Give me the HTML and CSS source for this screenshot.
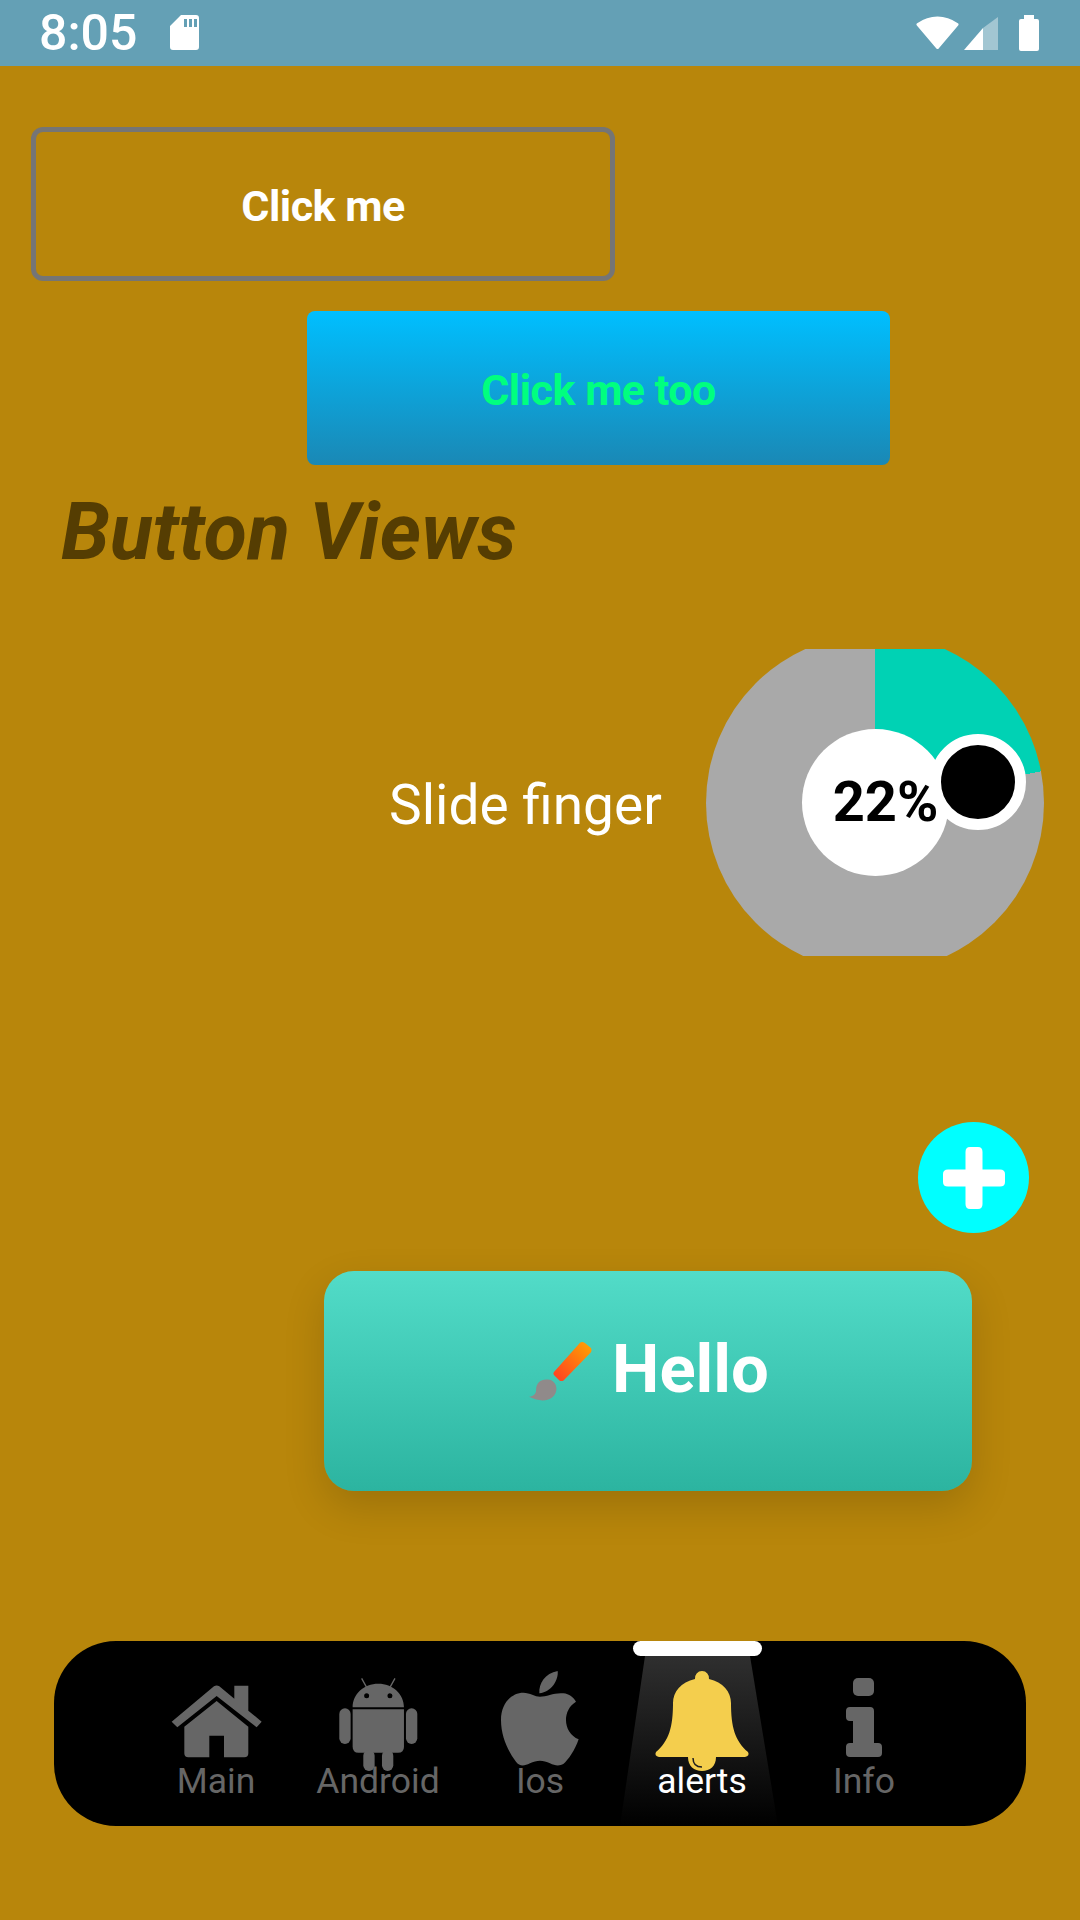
FILE: index.html
```html
<!DOCTYPE html>
<html lang="en">
<head>
    <meta charset="UTF-8">
    <meta name="viewport" content="width=device-width, initial-scale=1.0">
    <title>Button Views</title>
    <link rel="stylesheet" href="styles.css">
</head>
<body>

<!-- Status bar -->
<div class="status-bar">
    <span class="clock">8:05</span>
    <svg class="sd-icon" viewBox="0 0 29 35"><path fill="#fff" fill-rule="evenodd" d="M11 0H26Q29 0 29 3V32Q29 35 26 35H3Q0 35 0 32V11ZM14 4V12H17V4ZM19 4V12H22V4ZM24 4V12H27V4Z"/></svg>
    <div class="status-right">
        <svg class="wifi-icon" viewBox="0 0 43 33"><path fill="#fff" stroke="#fff" stroke-width="3" stroke-linejoin="round" d="M21.500 2C14 2 7 5 2 8.500L21.500 31.500L41 8.500C36 5 29 2 21.500 2Z"/></svg>
        <svg class="signal-icon" viewBox="0 0 35 33"><path fill="#fff" fill-opacity="0.4" d="M34 0V33H19V11Z"/><path fill="#fff" d="M19 11V33H0Z"/></svg>
        <svg class="battery-icon" viewBox="0 0 20 36"><path fill="#fff" d="M5 0H15V4H18Q20 4 20 6V34Q20 36 18 36H2Q0 36 0 34V6Q0 4 2 4H5Z"/></svg>
    </div>
</div>

<!-- Buttons -->
<div class="btn btn-outline">Click me</div>
<div class="btn btn-blue">Click me too</div>
<h1 class="title">Button Views</h1>

<!-- Slider -->
<div class="slider-row">
    <span class="slider-label">Slide finger</span>
    <div class="dial">
        <div class="dial-disc"></div>
        <div class="dial-center">22%</div>
        <div class="dial-handle"></div>
    </div>
</div>

<div class="fab-row">
    <div class="fab">
        <svg class="fab-plus" viewBox="0 0 62 62"><path fill="#fff" d="M27 0H35Q39.500 0 39.500 5V22.500H57Q62 22.500 62 27V35Q62 39.500 57 39.500H39.500V57Q39.500 62 35 62H27Q22.500 62 22.500 57V39.500H5Q0 39.500 0 35V27Q0 22.500 5 22.500H22.500V5Q22.500 0 27 0Z"/></svg>
    </div>
</div>

<div class="hello-row">
    <div class="hello-btn">
        <svg class="brush-icon" viewBox="0 0 62 62">
            <defs>
                <linearGradient id="brushGrad" x1="1" y1="0" x2="0" y2="1">
                    <stop offset="0" stop-color="#ffa500"/>
                    <stop offset="1" stop-color="#ff3b24"/>
                </linearGradient>
            </defs>
            <path fill="url(#brushGrad)" d="M50 1Q52 -1 55 1L61 6Q62 8 61 10L34 38Q32 39 30 38L25 33Q23 31 25 29Z"/>
            <path fill="#908a8a" d="M17 37C23 36 27 41 27 46C27 55 16 62 0 54C5 53 7 51 7 47C7 41 11 37 17 37Z"/>
        </svg>
        <span>Hello</span>
    </div>
</div>

<!-- Bottom navigation -->
<nav class="bottom-nav">
    <div class="nav-item">
        <svg class="nav-icon" viewBox="0 0 90 90"><g transform="translate(-131 -61) scale(0.3333)"><path d="M395 305L522 199Q530 194 538 199L583 236V197H625V272L665 305L650 322L530 228L412 322Z"/><path d="M530 243L625 320V400Q625 412 613 412H552V347H508V412H445Q433 412 433 400V320Z"/></g></svg>
        <span class="nav-label">Main</span>
    </div>
    <div class="nav-item">
        <svg class="nav-icon" viewBox="0 0 90 90"><g transform="translate(-293 -61) scale(0.3333)"><path d="M965 175L980 202M1065 175L1050 202" stroke="#666" stroke-width="4" fill="none"/><path fill-rule="evenodd" d="M938 262C938 222 972 191 1015 191C1058 191 1092 222 1092 262ZM980 220A7 7 0 1 0 980 235A7 7 0 1 0 980 220ZM1050 220A7 7 0 1 0 1050 235A7 7 0 1 0 1050 220Z"/><path d="M938 268H1092V380Q1092 398 1074 398H956Q938 398 938 380Z"/><rect x="898" y="265" width="34" height="107" rx="17"/><rect x="1098" y="265" width="34" height="107" rx="17"/><rect x="970" y="390" width="34" height="63" rx="17"/><rect x="1026" y="390" width="34" height="63" rx="17"/></g></svg>
        <span class="nav-label">Android</span>
    </div>
    <div class="nav-item">
        <svg class="nav-icon" viewBox="0 0 90 90"><g transform="translate(-15 -21) scale(0.3333)"><path d="M233 33C236 60 215 95 178 100C176 70 195 40 233 33Z"/><path d="M180 110C200 110 225 97 250 100C268 102 280 112 288 125C268 137 258 158 258 180C258 205 272 228 296 238C285 270 265 300 250 312C240 318 225 318 210 310C190 300 170 300 150 310C130 320 118 318 108 305C85 275 63 230 63 180C63 130 95 98 130 98C150 98 165 110 180 110Z"/></g></svg>
        <span class="nav-label">Ios</span>
    </div>
    <div class="nav-item nav-item-active">
        <div class="nav-beam"></div>
        <div class="nav-marker"></div>
        <svg class="nav-icon nav-icon-bell" viewBox="0 0 94 100"><path d="M47 0A7 7 0 0 1 54 8C68 11 76 21 76 32C76 56 80 70 93 81Q95 85 90 86H4Q-1 85 1 81C14 70 18 56 18 32C18 21 26 11 40 8A7 7 0 0 1 47 0Z"/><path d="M33 86H61C61 95 55 100 47 100C39 100 33 95 33 86Z"/><path fill="none" stroke="#1f1f1f" stroke-width="1.500" d="M38 87C38 93 41 96 47 96"/></svg>
        <span class="nav-label">alerts</span>
    </div>
    <div class="nav-item">
        <svg class="nav-icon" viewBox="0 0 90 90"><rect x="34" y="-3" width="21" height="18" rx="5"/><path d="M27 30Q27 26 31 26H51Q55 26 55 30V62H59Q63 62 63 66V72Q63 76 59 76H31Q27 76 27 72V66Q27 62 31 62H34V40H31Q27 40 27 36Z"/></svg>
        <span class="nav-label">Info</span>
    </div>
</nav>

</body>
</html>
```

FILE: styles.css
```css
html, body {
    margin: 0;
    padding: 0;
}
body {
    width: 1080px;
    height: 1920px;
    overflow: hidden;
    background: #b8860b;
    font-family: Roboto, "Noto Sans", sans-serif;
    color: #fff;
}

/* status bar */
.status-bar {
    height: 66px;
    background: #64a0b5;
    display: flex;
    align-items: center;
    padding: 0 41px 0 39px;
    box-sizing: border-box;
}
.clock {
    font-size: 50px;
    font-weight: 500;
    line-height: 66px;
}
.sd-icon {
    width: 29px;
    height: 35px;
    margin-left: 33px;
    margin-top: -1px;
}
.status-right {
    margin-left: auto;
    display: flex;
    align-items: center;
}
.wifi-icon {
    width: 43px;
    height: 33px;
    margin-top: -2px;
}
.signal-icon {
    width: 35px;
    height: 33px;
    margin-left: 5px;
}
.battery-icon {
    width: 20px;
    height: 36px;
    margin-left: 20px;
}

/* buttons */
.btn {
    display: flex;
    align-items: center;
    justify-content: center;
    width: 583px;
    height: 154px;
    padding-top: 3px;
    box-sizing: border-box;
    font-size: 43px;
    font-weight: 700;
    letter-spacing: -0.5px;
}
.btn-outline {
    width: 584px;
    margin: 61px 0 0 31px;
    border: 5px solid #757575;
    border-radius: 12px;
}
.btn-blue {
    margin: 30px 0 0 307px;
    border-radius: 8px;
    background: linear-gradient(#00bfff, #1a88b5);
    color: #00ff7f;
}
.title {
    margin: 12px 0 0 61px;
    font-size: 79px;
    line-height: 110px;
    font-weight: 700;
    font-style: italic;
    color: #553d02;
}

/* slider */
.slider-row {
    display: flex;
    align-items: center;
    height: 307px;
    margin-top: 62px;
}
.slider-label {
    margin-left: 389px;
    margin-top: 4px;
    font-size: 55px;
}
.dial {
    position: relative;
    width: 338px;
    height: 307px;
    margin-left: auto;
    margin-right: 36px;
    overflow: hidden;
}
.dial-disc {
    position: absolute;
    left: 0;
    top: -15px;
    width: 338px;
    height: 338px;
    border-radius: 50%;
    background: conic-gradient(#00d2b4 0 22%, #a9a9a9 22% 100%);
}
.dial-center {
    position: absolute;
    left: 96px;
    top: 80px;
    width: 147px;
    height: 147px;
    padding-left: 20px;
    box-sizing: border-box;
    border-radius: 50%;
    background: #fff;
    color: #000;
    font-size: 56px;
    font-weight: 700;
    line-height: 147px;
    text-align: center;
}
.dial-handle {
    position: absolute;
    left: 224px;
    top: 85px;
    width: 74px;
    height: 74px;
    border: 11px solid #fff;
    border-radius: 50%;
    background: #000;
}

/* plus */
.fab-row {
    display: flex;
    justify-content: flex-end;
    padding-right: 51px;
    margin-top: 166px;
}
.fab {
    width: 111px;
    height: 111px;
    border-radius: 50%;
    background: #0ff;
    display: flex;
    align-items: center;
    justify-content: center;
}
.fab-plus {
    width: 62px;
    height: 62px;
}

/* hello */
.hello-row {
    margin: 38px 0 0 324px;
}
.hello-btn {
    width: 648px;
    height: 220px;
    border-radius: 30px;
    background: linear-gradient(#52dcc8, #2cb4a0);
    box-shadow: 0 16px 40px rgba(0, 0, 0, 0.15);
    display: flex;
    align-items: flex-start;
    justify-content: center;
    gap: 20px;
    padding: 59px 0 0 2px;
    box-sizing: border-box;
    font-size: 67px;
    font-weight: 700;
    line-height: 78px;
}
.brush-icon {
    width: 63px;
    height: 63px;
    margin-top: 12px;
}

/* bottom nav */
.bottom-nav {
    position: relative;
    display: flex;
    justify-content: center;
    width: 972px;
    height: 185px;
    margin: 150px 0 0 54px;
    border-radius: 62px;
    background: #000;
    overflow: hidden;
}
.nav-item {
    position: relative;
    width: 162px;
    display: flex;
    flex-direction: column;
    align-items: center;
    color: #666;
}
.nav-icon {
    width: 90px;
    height: 90px;
    margin-top: 40px;
    fill: #666;
    overflow: visible;
    position: relative;
}
.nav-icon-bell {
    width: 94px;
    height: 100px;
    margin-top: 30px;
    fill: #f4ce4d;
}
.nav-label {
    position: absolute;
    top: 116px;
    font-size: 35.500px;
    line-height: 48px;
}
.nav-item-active .nav-label {
    color: #fff;
}
.nav-beam {
    position: absolute;
    left: -1px;
    top: 0;
    width: 158px;
    height: 185px;
    background: linear-gradient(#333, #000);
    clip-path: polygon(25px 15px, 130px 15px, 158px 185px, 0 185px);
}
.nav-marker {
    position: absolute;
    left: 12px;
    top: 0;
    width: 129px;
    height: 15px;
    border-radius: 8px;
    background: #fff;
}
```
